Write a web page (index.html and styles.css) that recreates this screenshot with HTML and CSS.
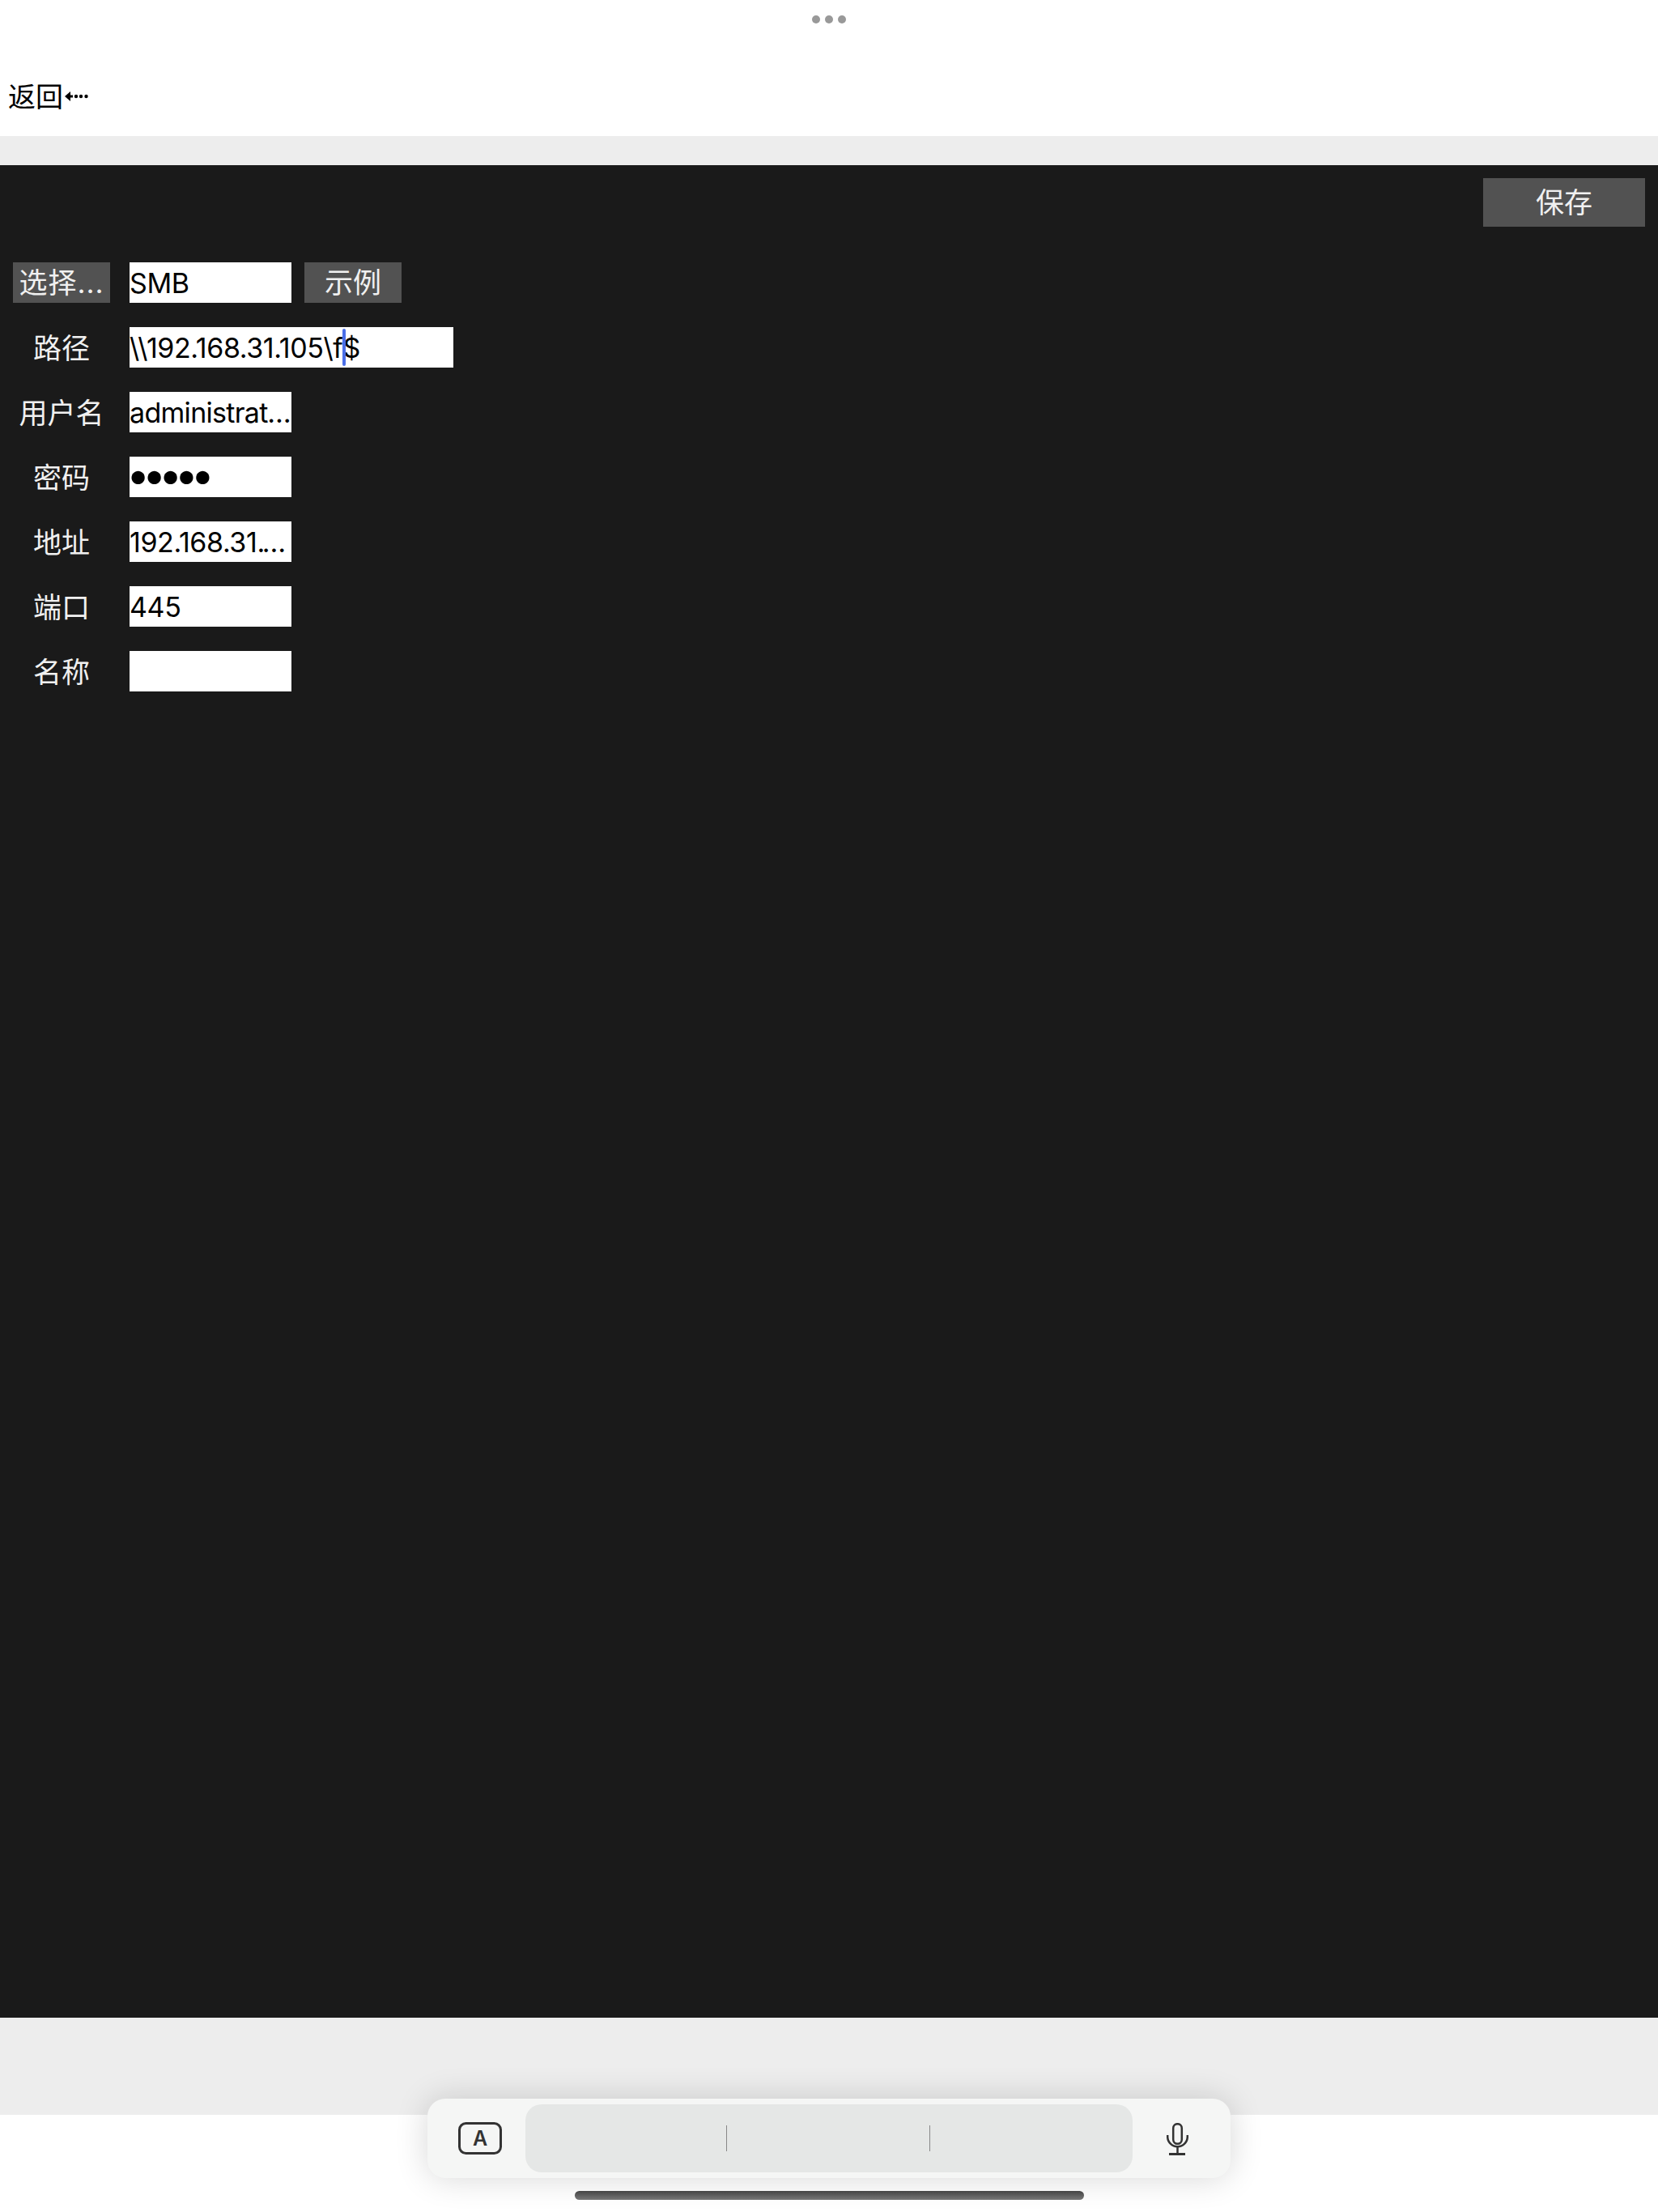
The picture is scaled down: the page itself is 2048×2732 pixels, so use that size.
FILE: index.html
```html
<!DOCTYPE html>
<html>

<head>
    <title>SMB</title>
    <link rel="stylesheet" href="styles.css">
</head>

<body>
    <header class="top-bar">
        <div class="dots"><i></i><i></i><i></i></div>
        <div class="back">
            <span>返回</span>
            <svg class="back-arrow" width="30" height="14" viewBox="0 0 30 14">
                <path d="M0 7 L7 1 V13 Z" />
                <rect x="7" y="5.5" width="3" height="3" />
                <circle cx="14" cy="7" r="2.2" />
                <circle cx="20" cy="7" r="2.2" />
                <circle cx="26.5" cy="7" r="2.2" />
            </svg>
        </div>
    </header>

    <main class="panel">
        <div class="save-row">
            <button class="btn btn-save">保存</button>
        </div>
        <div class="form">
            <div class="row">
                <button class="btn btn-select label-col">选择...</button>
                <input class="field" value="SMB" />
                <button class="btn">示例</button>
            </div>
            <div class="row">
                <label class="label-col">路径</label>
                <div class="path-wrap">
                    <input class="field field-wide" value="\\192.168.31.105\f$" />
                    <span class="caret"></span>
                </div>
            </div>
            <div class="row">
                <label class="label-col">用户名</label>
                <input class="field field-user" value="administrator" />
            </div>
            <div class="row">
                <label class="label-col">密码</label>
                <input class="field field-pass" type="password" value="12345" />
            </div>
            <div class="row">
                <label class="label-col">地址</label>
                <input class="field" value="192.168.31.105" />
            </div>
            <div class="row">
                <label class="label-col">端口</label>
                <input class="field" value="445" />
            </div>
            <div class="row">
                <label class="label-col">名称</label>
                <input class="field" />
            </div>
        </div>
    </main>

    <footer class="bottom"></footer>

    <div class="kb-bar">
        <svg class="kb-icon kb-icon-a" width="54" height="40" viewBox="0 0 54 40">
            <rect x="1.5" y="1.5" width="51" height="37" rx="8" fill="none" stroke="#333" stroke-width="3" />
            <text x="27" y="29" text-anchor="middle">A</text>
        </svg>
        <div class="kb-suggest">
            <span></span>
            <span></span>
        </div>
        <svg class="kb-icon kb-icon-mic" width="27" height="40" viewBox="0 0 27 40" fill="none" stroke="#333" stroke-width="2.5">
            <rect x="8.2" y="1.2" width="10.6" height="24.6" rx="5.3" />
            <path d="M1.2 15 V17 a12.3 12.3 0 0 0 24.6 0 V15" />
            <path d="M13.5 30 V38" />
            <path d="M3 38.5 H23" stroke-width="3" />
        </svg>
    </div>
    <div class="home-bar"></div>
</body>

</html>
```

FILE: styles.css
```css
* {
    box-sizing: border-box;
}

html,
body {
    margin: 0;
    height: 2732px;
}

body {
    position: relative;
    display: flex;
    flex-direction: column;
    background: #ededed;
    font-family: Inter, "Noto Sans CJK SC", sans-serif;
    overflow: hidden;
}

.top-bar {
    position: relative;
    height: 168px;
    background: #fff;
    padding: 100px 0 0 10px;
    margin-bottom: 36px;
}

.dots {
    position: absolute;
    top: 19px;
    left: 1003px;
    display: flex;
    gap: 6px;
}

.dots i {
    width: 10px;
    height: 10px;
    border-radius: 50%;
    background: #999;
}

.back {
    display: flex;
    align-items: center;
    font-size: 34px;
    line-height: 36px;
    color: #000;
    font-family: "Noto Sans CJK SC", sans-serif;
}

.back-arrow {
    margin-top: 2px;
    margin-left: 2px;
}

.panel {
    height: 2288px;
    background: #1a1a1a;
    padding: 16px;
}

.save-row {
    display: flex;
    justify-content: flex-end;
    margin-bottom: 44px;
}

.btn {
    width: 120px;
    height: 50px;
    padding: 0;
    border: none;
    border-radius: 0;
    background: #525252;
    color: #f0f0f0;
    font-size: 35px;
    line-height: 36px;
    font-family: inherit;
    white-space: nowrap;
}

.btn-save {
    width: 200px;
    height: 60px;
}

.btn-select {
    letter-spacing: 1px;
}

.form {
    display: flex;
    flex-direction: column;
    gap: 30px;
}

.row {
    display: flex;
    align-items: center;
    height: 50px;
}

.label-col {
    width: 120px;
    margin-right: 24px;
    padding-bottom: 3px;
    text-align: center;
    color: #f0f0f0;
    font-size: 35px;
}

.row .btn-select {
    padding: 0;
}

.field {
    width: 200px;
    height: 50px;
    padding: 0;
    margin-right: 16px;
    border: none;
    border-radius: 0;
    background: #fff;
    color: #000;
    font-size: 34px;
    letter-spacing: -0.4px;
    font-family: inherit;
    text-overflow: ellipsis;
}

.field-wide {
    width: 400px;
    margin: 0;
}

.field-user {
    letter-spacing: -0.7px;
}

.field-pass {
    padding-bottom: 6px;
    font-size: 52px;
    letter-spacing: -9.3px;
    text-indent: -4px;
}

.path-wrap {
    position: relative;
    height: 50px;
}

.caret {
    position: absolute;
    top: 2px;
    left: 263px;
    width: 4px;
    height: 46px;
    border-radius: 2px;
    background: #4a6ee8;
}

.bottom {
    height: 120px;
    margin-top: 120px;
    background: #fff;
}

.kb-bar {
    position: absolute;
    top: 2592px;
    left: 528px;
    width: 992px;
    height: 98px;
    padding: 7px 0;
    display: flex;
    align-items: center;
    background: #f5f6f5;
    border-radius: 22px;
    box-shadow: 0 0 40px rgb(0 0 0 / 16%);
}

.kb-icon {
    flex: none;
}

.kb-icon-a {
    margin: 0 29px 0 38px;
}

.kb-icon-mic {
    margin: 2px 52px 0 42px;
}

.kb-icon text {
    font-family: Inter, sans-serif;
    font-size: 25px;
    font-weight: 600;
    fill: #333;
}

.kb-suggest {
    position: relative;
    flex: 1;
    height: 84px;
    display: grid;
    grid-template-columns: repeat(3, 1fr);
    background: #e5e7e6;
    border-radius: 20px;
}

.kb-suggest span {
    width: 1px;
    height: 32px;
    margin: 26px 0 0 248px;
    background: #888;
}

.kb-suggest span:nth-child(2) {
    margin-left: 249px;
}

.home-bar {
    position: absolute;
    top: 2706px;
    left: 710px;
    width: 629px;
    height: 11px;
    border-radius: 6px;
    background: linear-gradient(#444, #777);
}
```
